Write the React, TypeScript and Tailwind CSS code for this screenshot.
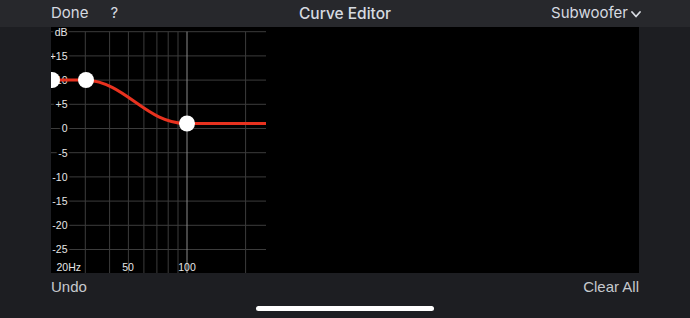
import React from 'react';

// log-scale frequency grid, 20Hz at x=0
const vLines = [34.3, 58.6, 77.4, 92.9, 105.9, 117.2, 127, 194.6];
const rows = ['dB', '+15', '+10', '+5', '0', '-5', '-10', '-15', '-20', '-25'];
const rowY = (i: number) => 4.7 + i * 24.2;

function CurveChart() {
  return (
    <svg width={588} height={246} className="block" style={{ fontFamily: '"Liberation Sans", Arial, sans-serif' }}>
      {rows.map((_, i) => (
        <line key={i} x1={0} x2={215} y1={rowY(i)} y2={rowY(i)} stroke="#3c3c3c" strokeWidth={1} />
      ))}
      {vLines.map((x) => (
        <line key={x} x1={x} x2={x} y1={4.7} y2={246} stroke="#3c3c3c" strokeWidth={1} />
      ))}
      <line x1={136} x2={136} y1={4.7} y2={246} stroke="#8a8a8a" strokeWidth={1} />

      {rows.map((label, i) => (
        <text
          key={label}
          x={16.5}
          y={rowY(i) + 3.8}
          textAnchor="end"
          fontSize={10.5}
          fill="#e6e6e6"
          stroke="#000"
          strokeWidth={4}
          paintOrder="stroke"
        >
          {label}
        </text>
      ))}

      <text x={5.5} y={243.5} fontSize={10.5} fill="#e6e6e6">20Hz</text>
      <text x={77} y={243.5} fontSize={10.5} fill="#e6e6e6" textAnchor="middle">50</text>
      <text x={136} y={243.5} fontSize={10.5} fill="#e6e6e6" textAnchor="middle">100</text>

      <path
        d="M0 53 L35 53 C75 55 95 97 136 96.5 L215 96.5"
        fill="none"
        stroke="#e8321f"
        strokeWidth={3}
      />
      <circle cx={1} cy={53} r={8} fill="#fff" />
      <circle cx={35} cy={53} r={8} fill="#fff" />
      <circle cx={136} cy={96.5} r={8} fill="#fff" />
    </svg>
  );
}

export default function App() {
  return (
    <div
      className="w-[690px] h-[318px] bg-[#1d1e22] flex flex-col overflow-hidden"
      style={{ fontFamily: 'Inter, "Noto Sans", sans-serif' }}
    >
      <header className="h-[27px] shrink-0 bg-[#27282c] grid grid-cols-[1fr_auto_1fr] items-center px-[51px] text-[#d6dae0]">
        <div className="flex items-center gap-[22px] text-[15px]">
          <span>Done</span>
          <span>?</span>
        </div>
        <div className="text-[15.5px] font-medium">Curve Editor</div>
        <div className="flex items-center justify-end gap-[3px] text-[15px] -mr-[2px]">
          <span>Subwoofer</span>
          <svg width={10} height={7} viewBox="0 0 10 7" className="mt-[1px]">
            <polyline points="1,1 5,5.5 9,1" fill="none" stroke="#d6dae0" strokeWidth={1.8} strokeLinecap="round" strokeLinejoin="round" />
          </svg>
        </div>
      </header>

      <div className="px-[51px] shrink-0">
        <div className="w-[588px] h-[246px] bg-black overflow-hidden">
          <CurveChart />
        </div>
      </div>

      <div
        className="flex justify-between px-[51px] pt-[5px] text-[15px] leading-[18px] text-[#c6c9ce]"
        style={{ fontFamily: '"Liberation Sans", Arial, sans-serif' }}
      >
        <button>Undo</button>
        <button>Clear All</button>
      </div>

      <div className="flex justify-center pt-[10px]">
        <div className="w-[178px] h-[5px] rounded-full bg-white" />
      </div>
    </div>
  );
}
